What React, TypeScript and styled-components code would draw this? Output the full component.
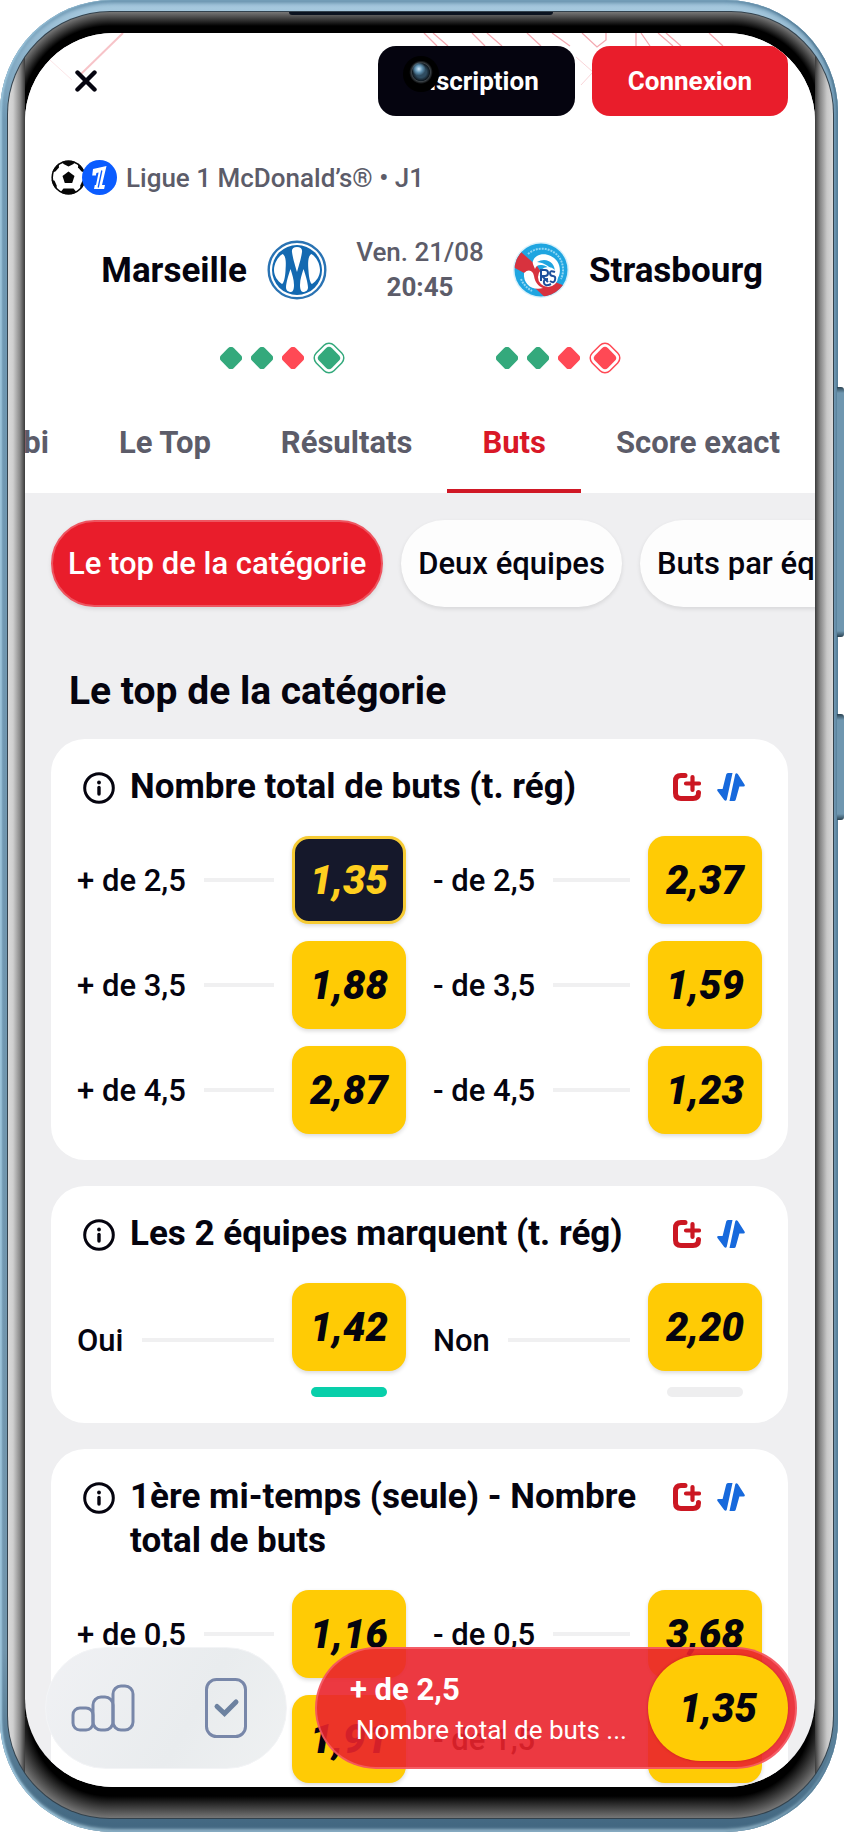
import * as React from "react";
import styled, { createGlobalStyle, css } from "styled-components";

type Result = "win" | "loss";

type Choice = {
  label: string;
  odd: string;
  selected?: boolean;
  trend?: number;
};

type Market = {
  title: string;
  choices: Choice[];
};

const tabs = ["Combi", "Le Top", "Résultats", "Buts", "Score exact"];
const filters = ["Le top de la catégorie", "Deux équipes", "Buts par équipe"];

const homeForm: Result[] = ["win", "win", "loss", "win"];
const awayForm: Result[] = ["win", "win", "loss", "loss"];

const markets: Market[] = [
  {
    title: "Nombre total de buts (t. rég)",
    choices: [
      { label: "+ de 2,5", odd: "1,35", selected: true },
      { label: "- de 2,5", odd: "2,37" },
      { label: "+ de 3,5", odd: "1,88" },
      { label: "- de 3,5", odd: "1,59" },
      { label: "+ de 4,5", odd: "2,87" },
      { label: "- de 4,5", odd: "1,23" },
    ],
  },
  {
    title: "Les 2 équipes marquent (t. rég)",
    choices: [
      { label: "Oui", odd: "1,42", trend: 100 },
      { label: "Non", odd: "2,20", trend: 0 },
    ],
  },
  {
    title: "1ère mi-temps (seule) - Nombre total de buts",
    choices: [
      { label: "+ de 0,5", odd: "1,16" },
      { label: "- de 0,5", odd: "3,68" },
      { label: "+ de 1,5", odd: "1,91" },
      { label: "- de 1,5", odd: "1,75" },
    ],
  },
];

export default function App() {
  const [tab, setTab] = React.useState("Buts");
  const [filter, setFilter] = React.useState(filters[0]);

  return (
    <>
      <GlobalStyle />

      <Device>
        <SideKey $top={387} $height={250} />
        <SideKey $top={714} $height={106} />

        <Bezel>
          <Speaker />
          <Screen>
            <Header>
              <HeaderPattern />

              <TopBar>
                <CloseButton aria-label="Fermer">
                  <CloseIcon />
                </CloseButton>
                <AuthButton $dark>Inscription</AuthButton>
                <AuthButton>Connexion</AuthButton>
              </TopBar>

              <League>
                <LeagueIcons>
                  <BallIcon />
                  <LeagueIcon />
                </LeagueIcons>
                Ligue 1 McDonald’s® • J1
              </League>

              <Match>
                <Team $side="home">
                  <TeamName>Marseille</TeamName>
                  <MarseilleLogo />
                </Team>
                <Kickoff>
                  Ven. 21/08
                  <strong>20:45</strong>
                </Kickoff>
                <Team $side="away">
                  <StrasbourgLogo />
                  <TeamName>Strasbourg</TeamName>
                </Team>
              </Match>

              <Forms>
                <Form results={homeForm} />
                <Form results={awayForm} />
              </Forms>

              <Tabs>
                {tabs.map((name) => (
                  <Tab
                    key={name}
                    $active={name === tab}
                    onClick={() => setTab(name)}
                  >
                    {name}
                  </Tab>
                ))}
              </Tabs>
            </Header>

            <Filters>
              {filters.map((name) => (
                <Filter
                  key={name}
                  $active={name === filter}
                  onClick={() => setFilter(name)}
                >
                  {name}
                </Filter>
              ))}
            </Filters>

            <Heading>Le top de la catégorie</Heading>

            <Markets>
              {markets.map((market) => (
                <MarketCard key={market.title} {...market} />
              ))}
            </Markets>

            <BottomBar>
              <Shortcuts>
                <ShortcutButton aria-label="Statistiques">
                  <StatsIcon />
                </ShortcutButton>
                <ShortcutButton aria-label="Mes paris">
                  <TicketIcon />
                </ShortcutButton>
              </Shortcuts>

              <Betslip>
                <BetslipText>
                  <BetslipTitle>+ de 2,5</BetslipTitle>
                  <BetslipMarket>Nombre total de buts ...</BetslipMarket>
                </BetslipText>
                <BetslipOdd>1,35</BetslipOdd>
              </Betslip>
            </BottomBar>
          </Screen>
          <Camera />
        </Bezel>
      </Device>
    </>
  );
}

const MarketCard = ({ title, choices }: Market) => (
  <Card>
    <CardHeader>
      <InfoIcon />
      <CardTitle>{title}</CardTitle>
      <CardIcons>
        <CashoutIcon />
        <SwapIcon />
      </CardIcons>
    </CardHeader>

    <Choices>
      {choices.map(({ label, odd, selected, trend }) => (
        <ChoiceRow key={label}>
          {label}
          <Line />
          <OddColumn>
            <Odd $selected={selected}>{odd}</Odd>
            {trend !== undefined && (
              <Trend>
                <TrendValue style={{ width: `${trend}%` }} />
              </Trend>
            )}
          </OddColumn>
        </ChoiceRow>
      ))}
    </Choices>
  </Card>
);

const Form = ({ results }: { results: Result[] }) => (
  <FormList>
    {results.map((result, i) => {
      const color = result === "win" ? "#34a97c" : "#ff4955";
      const last = i === results.length - 1;

      return last ? (
        <svg key={i} width="32" height="34" viewBox="-16 -17 32 34">
          <g transform="rotate(45)">
            <rect
              x="-12.5"
              y="-12.5"
              width="25"
              height="25"
              rx="7"
              fill="none"
              stroke={color}
              strokeWidth="1.5"
            />
            <rect x="-9" y="-9" width="18" height="18" rx="4" fill={color} />
          </g>
        </svg>
      ) : (
        <svg key={i} width="22" height="22" viewBox="-11 -11 22 22">
          <rect
            x="-9"
            y="-9"
            width="18"
            height="18"
            rx="4"
            fill={color}
            transform="rotate(45)"
          />
        </svg>
      );
    })}
  </FormList>
);

const HeaderPattern = () => (
  <Pattern viewBox="0 0 790 60" fill="none" stroke="#f3a9b1" aria-hidden>
    <path d="M98 0 56 41" strokeWidth="2" opacity=".7" />
    <path d="M25 27 47 47" opacity=".3" />
    <path
      d="M399 0l13 13M408 0l15 13M447 0l13 13M462 0l15 13M502 0l14 13M527 0l18 13
      M557 0l15 14 9-7V0M611 0v13M616 0l9 13M633 0l15 13M641 0l15 13M684 0l14 13"
      strokeWidth="1.3"
    />
    <path d="M551 24l17 15-12 13" opacity=".5" />
  </Pattern>
);

const CloseIcon = () => (
  <svg width="22" height="22" viewBox="0 0 22 22">
    <path
      d="M2.5 2.5l17 17M19.5 2.5l-17 17"
      stroke="#05040f"
      strokeWidth="4.4"
      strokeLinecap="round"
    />
  </svg>
);

const BallIcon = () => (
  <svg width="35" height="35" viewBox="0 0 35 35">
    <defs>
      <clipPath id="ball">
        <circle cx="17.5" cy="17.5" r="17" />
      </clipPath>
    </defs>
    <circle cx="17.5" cy="17.5" r="16.3" fill="#fff" stroke="#060606" strokeWidth="1.6" />
    <g fill="#060606" clipPath="url(#ball)">
      <path d="M17.5 11.5l6 4.4-2.3 7.1h-7.4l-2.3-7.1z" />
      <path d="M10 0h15l-2.5 4-5 2.4-5-2.4z" />
      <path d="M1.5 7l6-4.4L8 7.4 4.4 11.6-1 13z" />
      <path d="M33.5 7l-6-4.4L27 7.4l3.6 4.2L36 13z" />
      <path d="M-1 19l4.6 1.8 2.2 5L5 31-2 27z" />
      <path d="M36 19l-4.6 1.8-2.2 5L30 31l7-4z" />
      <path d="M12.5 28.5h10l2.5 3-3 5h-9l-3-5z" />
    </g>
  </svg>
);

const LeagueIcon = () => (
  <svg width="35" height="35" viewBox="0 0 35 35">
    <circle cx="17.5" cy="17.5" r="17.5" fill="#0b5cff" />
    <path
      d="M11 9l13.500-3-4.500 19h3l-.9 4H12l.8-4h1.200l2.600-12.400-2.200.5-.5 2.400h-3.700z"
      fill="#fff"
    />
    <path d="M19.800 10.500l-3.600 17" stroke="#0b5cff" strokeWidth="1.300" />
  </svg>
);

const MarseilleLogo = () => (
  <svg width="60" height="60" viewBox="0 0 60 60">
    <circle cx="30" cy="30" r="28.300" fill="#fff" stroke="#2a73b3" strokeWidth="2.400" />
    <circle cx="30" cy="30" r="25" fill="#1369b1" />
    <g fill="#fff">
      <path d="M15.500 14c4 2 3.500 10 3 17-.4 6-1.500 12-3.500 13C10.500 41 7 36 7 30s3.500-13 8.500-16z" />
      <path d="M44.500 14c-4 2-3.500 10-3 17 .4 6 1.500 12 3.500 13 4.500-3 8-8 8-14s-3.500-13-8.500-16z" />
      <path d="M30 7c3.500 0 5.500 1.500 5 5-.5 5-3.500 15-5 20-1.500-5-4.500-15-5-20-.5-3.500 1.500-5 5-5z" />
      <path d="M23.500 29c1.500 5 3.500 10 3.500 16 0 4-1 7-3 7-2.500 0-5-1.500-5-4.500 0-4 2.500-13 4.500-18.500z" />
      <path d="M36.500 29c-1.500 5-3.500 10-3.500 16 0 4 1 7 3 7 2.500 0 5-1.500 5-4.500 0-4-2.500-13-4.500-18.500z" />
    </g>
  </svg>
);

const StrasbourgLogo = () => (
  <svg width="56" height="56" viewBox="0 0 56 56">
    <defs>
      <clipPath id="racing">
        <circle cx="28" cy="28" r="26.500" />
      </clipPath>
    </defs>
    <circle cx="28" cy="28" r="28" fill="#d9f1fb" />
    <g clipPath="url(#racing)">
      <path d="M0 0h56v56H0z" fill="#1fa5e0" />
      <path d="M-2 24L8 10l16 14 8 12 20 8-15 16-15-14-9-14z" fill="#d8323e" />
      <path
        d="M11 31c5-5 9-2 10 3 1 6 4 10 9 12-10 3-20-3-19-15z"
        fill="#fff"
      />
      <path
        d="M20 19c3-9 17-9 24 0 5 7 3 17-2 20 0-10-7-15-13-16-4-.5-6 1-7 4-1-3-3-5-2-8z"
        fill="#fff"
      />
      <path d="M24 20c8-5 19-1 18 12-4-7-10-11-18-12z" fill="#1fa5e0" />
      <circle cx="35" cy="35" r="10" fill="#fff" />
    </g>
    <path
      d="M15 12c9-8 23-7 31 3 5 7 5 16 2 22"
      fill="none"
      stroke="#8fd6f3"
      strokeWidth="2"
      strokeDasharray="2 1"
    />
    <path
      d="M8 37c2 5 6 9 11 12"
      fill="none"
      stroke="#8fd6f3"
      strokeWidth="2"
      strokeDasharray="2 1"
    />
    <g fill="none" stroke="#1d4f9c" strokeWidth="2">
      <path d="M28 39V28h4q3 0 3 3t-3 3h-3l6 6" />
      <path d="M42 30q-5-2-5 1t3 3 2 4-5 1" />
      <path d="M38 42q-6 3-7-1t4-4" />
    </g>
  </svg>
);

const InfoIcon = () => (
  <svg width="32" height="32" viewBox="0 0 32 32">
    <circle cx="16" cy="16" r="14.300" fill="none" stroke="#05040f" strokeWidth="3" />
    <circle cx="16" cy="10.500" r="1.900" fill="#05040f" />
    <path d="M16 15.500v6.500" stroke="#05040f" strokeWidth="3.400" strokeLinecap="round" />
  </svg>
);

const CashoutIcon = () => (
  <svg width="28" height="28" viewBox="0 0 28 28">
    <g fill="none" stroke="#cb1722" strokeLinecap="round">
      <path
        d="M12 2.500H8Q2.500 2.500 2.500 8v12q0 5.500 5.500 5.500h12q5.500 0 5.500-5.500v-.5"
        strokeWidth="5"
      />
      <path d="M19.500 4v13M13 10.500h13" strokeWidth="4.200" />
    </g>
  </svg>
);

const SwapIcon = () => (
  <svg width="28" height="28" viewBox="0 0 28 28" fill="#1769dc">
    <path d="M9.200 1.500Q9.600 0 11 0h4.500L9.800 26.500Q9 28.800 7.200 27L.5 18q-1-2 1-2h4.100z" />
    <path d="M18.800 26.500Q18.400 28 17 28h-4.500L18.200 1.500Q19-.8 20.800 1l6.700 10.500q1 2-1 2h-4.100z" />
  </svg>
);

const StatsIcon = () => (
  <svg width="64" height="48" viewBox="0 0 64 48">
    <g fill="none" stroke="#7887a9" strokeWidth="3">
      <rect x="2" y="24" width="20" height="22" rx="7" />
      <rect x="22" y="13" width="20" height="33" rx="8" />
      <rect x="42" y="2" width="20" height="44" rx="8" />
    </g>
  </svg>
);

const TicketIcon = () => (
  <svg width="42" height="60" viewBox="0 0 42 60">
    <rect x="1.500" y="1.500" width="39" height="57" rx="10" fill="none" stroke="#7887a9" strokeWidth="3" />
    <path
      d="M12 28.500l7.500 7L31 24"
      fill="none"
      stroke="#6d82a0"
      strokeWidth="5"
      strokeLinecap="round"
    />
  </svg>
);

const GlobalStyle = createGlobalStyle`
  * {
    box-sizing: border-box;
  }

  body {
    margin: 0;
    background: #fff;
    color: #05040f;
    font-family: Roboto, "Liberation Sans", sans-serif;
  }

  button {
    margin: 0;
    padding: 0;
    border: 0;
    background: none;
    color: inherit;
    font: inherit;
    white-space: nowrap;
    cursor: pointer;
  }

  svg {
    display: block;
    flex: none;
  }
`;

const Device = styled.div`
  position: relative;
  height: 100vh;
  margin-right: 6px;
  padding: 12px 5px 14px 8px;
  border-radius: 112px;
  background: linear-gradient(#a9cbe0, #6f98b3 120px, #7296ad 90%, #416680);
  box-shadow: inset 2px 0 2px #9cc5dc, inset -2px 0 2px #557d97,
    inset 0 -3px 3px #8fb1c4, inset 0 3px 4px #5f8aa6;
`;

const SideKey = styled.div<{ $top: number; $height: number }>`
  position: absolute;
  right: -6px;
  top: ${(p) => p.$top}px;
  width: 7px;
  height: ${(p) => p.$height}px;
  border-radius: 0 3px 3px 0;
  background: linear-gradient(
    #2b4352,
    #6f97b0 6px,
    #6f97b0 calc(100% - 6px),
    #2b4352
  );
`;

const Bezel = styled.div`
  position: relative;
  height: 100%;
  padding: 21px 18px 31px 17px;
  border-radius: 102px;
  overflow: hidden;
  background:
    linear-gradient(90deg, #d8d8d8, #cfcfcf 5px, #8a8a8a 12px, #3a3a3a 17px)
      left / 17px 100% no-repeat,
    linear-gradient(270deg, #d8d8d8, #c8c8c8 6px, #858585 13px, #3a3a3a 18px)
      right / 18px 100% no-repeat,
    radial-gradient(circle at 102px 102px, #000 88px, #777 102px) left top /
      102px 102px no-repeat,
    radial-gradient(circle at 0 102px, #000 88px, #777 102px) right top / 102px
      102px no-repeat,
    radial-gradient(circle at 102px 0, #000 80px, #777 102px) left bottom /
      102px 102px no-repeat,
    radial-gradient(circle at 0 0, #000 80px, #777 102px) right bottom / 102px
      102px no-repeat,
    linear-gradient(#777, #000 14px) top / calc(100% - 204px) 21px no-repeat,
    linear-gradient(0deg, #777, #000 22px) bottom / calc(100% - 204px) 31px
      no-repeat,
    #000;
  box-shadow: 0 0 0 1px #33424d;
`;

const Speaker = styled.div`
  position: absolute;
  top: 0;
  left: 50%;
  width: 264px;
  height: 3px;
  margin-left: -132px;
  border-radius: 0 0 4px 4px;
  background: #0b1320;
  z-index: 1;
`;

const Screen = styled.main`
  position: relative;
  height: 100%;
  border-radius: 88px;
  overflow: hidden;
  background: #efeff1;
`;

const Camera = styled.div`
  position: absolute;
  top: 44px;
  left: 50%;
  width: 36px;
  height: 36px;
  margin-left: -18px;
  border-radius: 50%;
  background:
    radial-gradient(circle at 44% 36%, #cfe9fb, #5d8fae 12%, transparent 22%),
    radial-gradient(
      circle at 50% 45%,
      #2f4c60 20%,
      #101a22 32%,
      #3b4247 35%,
      #000 44%
    );
`;

const Header = styled.header`
  position: relative;
  padding-top: 13px;
  background: #fff;
`;

const Pattern = styled.svg`
  position: absolute;
  top: 0;
  left: 0;
  width: 100%;
`;

const TopBar = styled.div`
  position: relative;
  display: flex;
  gap: 17px;
  padding: 0 27px 0 26px;
`;

const CloseButton = styled.button`
  display: flex;
  align-items: center;
  justify-content: center;
  width: 70px;
  height: 70px;
  margin-right: auto;
`;

const AuthButton = styled.button<{ $dark?: boolean }>`
  height: 70px;
  padding: 0 36px;
  border-radius: 18px;
  background: ${(p) => (p.$dark ? "#05040f" : "#e91d2b")};
  color: #fff;
  font-size: 26px;
  font-weight: 700;
`;

const League = styled.div`
  display: flex;
  align-items: center;
  gap: 9px;
  height: 35px;
  margin-top: 44px;
  padding-left: 26px;
  color: #5c5c69;
  font-size: 26px;
  font-weight: 500;
`;

const LeagueIcons = styled.div`
  display: flex;

  svg + svg {
    margin-left: -4px;
  }
`;

const Match = styled.div`
  display: grid;
  grid-template-columns: 1fr 128px 1fr;
  align-items: center;
  gap: 29px;
  margin-top: 40px;
`;

const Team = styled.div<{ $side: "home" | "away" }>`
  display: flex;
  align-items: center;
  justify-content: ${(p) => (p.$side === "home" ? "flex-end" : "flex-start")};
  gap: 20px;
`;

const TeamName = styled.span`
  font-size: 35px;
  font-weight: 700;
`;

const Kickoff = styled.div`
  color: #5c5c69;
  font-size: 26px;
  font-weight: 500;
  line-height: 35px;
  text-align: center;

  strong {
    display: block;
    font-weight: 700;
  }
`;

const Forms = styled.div`
  display: flex;
  justify-content: center;
  gap: 151px;
  margin-top: 36px;
`;

const FormList = styled.div`
  display: flex;
  align-items: center;
  gap: 9px;
`;

const Tabs = styled.nav`
  display: flex;
  justify-content: flex-end;
  margin-top: 16px;
`;

const Tab = styled.button<{ $active: boolean }>`
  flex: none;
  height: 102px;
  padding: 0 35px;
  border-top: 4px solid transparent;
  border-bottom: 4px solid ${(p) => (p.$active ? "#d01826" : "transparent")};
  color: ${(p) => (p.$active ? "#d91827" : "#5c5c69")};
  font-size: 31px;
  font-weight: 700;
`;

const Filters = styled.div`
  display: flex;
  gap: 18px;
  padding: 27px 0 0 26px;
`;

const Filter = styled.button<{ $active: boolean }>`
  flex: none;
  height: 87px;
  padding: 0 17px;
  border-radius: 44px;
  background: #fdfdfd;
  font-size: 31px;
  font-weight: 500;
  box-shadow: 0 2px 4px rgba(0, 0, 0, 0.1);

  ${(p) =>
    p.$active &&
    css`
      border: 2px solid #ee5560;
      padding: 0 15px;
      background: #e91d2b;
      color: #fff;
    `}
`;

const Heading = styled.h1`
  margin: 61px 0 25px;
  padding-left: 44px;
  font-size: 39px;
  font-weight: 700;
  line-height: 46px;
`;

const Markets = styled.div`
  display: grid;
  gap: 26px;
  padding: 0 27px 0 26px;
`;

const Card = styled.section`
  padding: 26px;
  border-radius: 34px;
  background: #fff;
`;

const CardHeader = styled.div`
  display: flex;
  padding: 0 17px 0 6px;

  svg {
    margin-top: 7px;
  }
`;

const CardTitle = styled.h2`
  flex: 1;
  margin: 0 16px 0 15px;
  font-size: 35px;
  font-weight: 700;
  line-height: 44px;
`;

const CardIcons = styled.div`
  display: flex;
  gap: 16px;

  svg {
    margin-top: 8px;
  }
`;

const Choices = styled.div`
  display: grid;
  grid-template-columns: 1fr 1fr;
  gap: 17px 27px;
  margin-top: 27px;
`;

const ChoiceRow = styled.div`
  display: flex;
  align-items: center;
  gap: 18px;
  font-size: 31px;
  font-weight: 500;
`;

const Line = styled.span`
  flex: 1;
  height: 4px;
  background: #f0f0f1;
`;

const OddColumn = styled.div`
  display: grid;
  justify-items: center;
  gap: 16px;
`;

const Odd = styled.button<{ $selected?: boolean }>`
  width: 114px;
  height: 88px;
  border-radius: 17px;
  background: #ffcb05;
  font-size: 40px;
  font-style: italic;
  font-weight: 900;
  box-shadow: 0 2px 4px rgba(0, 0, 0, 0.15);

  ${(p) =>
    p.$selected &&
    css`
      border: 3px solid #f6cb34;
      background: #15182b;
      color: #ffcf1f;
    `}
`;

const Trend = styled.div`
  width: 76px;
  height: 10px;
  border-radius: 5px;
  overflow: hidden;
  background: #eeeeef;
`;

const TrendValue = styled.div`
  height: 100%;
  background: #08cfaa;
`;

const BottomBar = styled.div`
  position: absolute;
  right: 18px;
  bottom: 18px;
  left: 20px;
  display: flex;
  justify-content: space-between;
  height: 122px;
`;

const Shortcuts = styled.div`
  display: flex;
  align-items: center;
  gap: 70px;
  padding: 0 39px 0 25px;
  border: 1px solid #f3f4f6;
  border-radius: 61px;
  background: linear-gradient(120deg, #f0f1f4, #e9ecee 60%, #eff1f2);
`;

const ShortcutButton = styled.button`
  display: block;
`;

const Betslip = styled.div`
  display: flex;
  justify-content: space-between;
  align-items: center;
  width: 482px;
  padding: 0 7px 0 33px;
  border: 2px solid rgba(255, 130, 140, 0.5);
  border-radius: 61px;
  background: rgba(234, 35, 44, 0.9);
  color: #fff;
`;

const BetslipText = styled.div`
  padding-top: 4px;
  line-height: 40px;
`;

const BetslipTitle = styled.div`
  font-size: 31px;
  font-weight: 700;
`;

const BetslipMarket = styled.div`
  padding-left: 6px;
  font-size: 26px;
`;

const BetslipOdd = styled.button`
  width: 140px;
  height: 106px;
  border-radius: 53px;
  background: #ffcb05;
  color: #05040f;
  font-size: 40px;
  font-style: italic;
  font-weight: 900;
  box-shadow: 0 0 3px rgba(150, 0, 0, 0.4);
`;
